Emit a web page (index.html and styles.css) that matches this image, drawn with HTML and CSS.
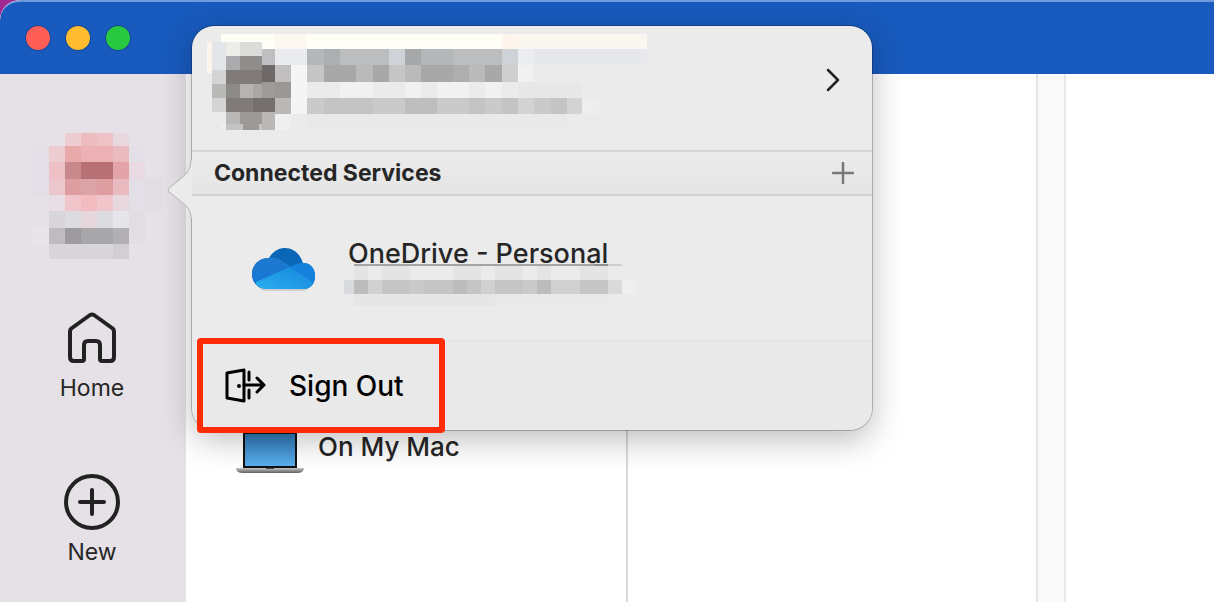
FILE: index.html
```
<!DOCTYPE html>
<html lang="en">
<head>
    <meta charset="UTF-8">
    <meta name="viewport" content="width=device-width, initial-scale=1.0">
    <title>Accounts</title>
    <link rel="stylesheet" href="styles.css">
</head>
<body>
    <div class="window">
        <header class="titlebar">
            <button class="light close" aria-label="Close"></button>
            <button class="light minimize" aria-label="Minimize"></button>
            <button class="light zoom" aria-label="Zoom"></button>
        </header>

        <main class="content">
            <nav class="sidebar">
                <button class="account" aria-label="Account">
                    <svg class="account-mosaic" viewBox="36 69 391 378" shape-rendering="crispEdges">
                        <path fill="#e2e0e6" d="M36 109h50v145H36zM328 109h48v194h-48z"/>
                        <path fill="#e1dde2" d="M376 207h51v97h-51zM328 304h48v98h-48z"/>
                        <path fill="#edcdd2" d="M134 69h49v40h-49zM86 109h48v48H86z"/>
                        <path fill="#edbcc1" d="M183 69h48v40h-48z"/>
                        <path fill="#edc3c8" d="M231 69h49v40h-49z"/>
                        <path fill="#e7d8dd" d="M280 69h48v40h-48zM280 254h48v50h-48z"/>
                        <path fill="#e9a8aa" d="M134 109h49v48h-49z"/>
                        <path fill="#ebb1b4" d="M183 109h97v48h-97z"/>
                        <path fill="#e9babf" d="M280 109h48v48h-48zM280 207h48v47h-48z"/>
                        <path fill="#edc0c5" d="M86 157h48v50H86z"/>
                        <path fill="#c9888c" d="M134 157h49v50h-49z"/>
                        <path fill="#b77175" d="M183 157h97v50h-97z"/>
                        <path fill="#e2a4a8" d="M280 157h48v50h-48z"/>
                        <path fill="#e8dae0" d="M328 157h48v50h-48z"/>
                        <path fill="#ebc7cd" d="M86 207h48v47H86z"/>
                        <path fill="#dd9da1" d="M134 207h49v47h-49zM231 207h49v47h-49z"/>
                        <path fill="#dca3a7" d="M183 207h48v47h-48z"/>
                        <path fill="#e8dfe4" d="M86 254h48v50H86z"/>
                        <path fill="#f0c6cb" d="M134 254h49v50h-49zM231 254h49v50h-49z"/>
                        <path fill="#f1bbbf" d="M183 254h48v50h-48z"/>
                        <path fill="#d8d6da" d="M86 304h48v50H86z"/>
                        <path fill="#dcdbdf" d="M134 304h49v50h-49zM231 304h49v50h-49z"/>
                        <path fill="#e5d6db" d="M183 304h48v50h-48z"/>
                        <path fill="#e5e5ea" d="M280 304h48v50h-48z"/>
                        <path fill="#e9e4ea" d="M36 354h50v48H36z"/>
                        <path fill="#bfbbbf" d="M86 354h48v48H86z"/>
                        <path fill="#9e9b9e" d="M134 354h49v48h-49z"/>
                        <path fill="#a7a6a9" d="M183 354h97v48h-97z"/>
                        <path fill="#b3b0b4" d="M280 354h48v48h-48z"/>
                        <path fill="#d9d6db" d="M86 402h194v45H86z"/>
                        <path fill="#d2cfd3" d="M280 402h48v45h-48z"/>
                    </svg>
                </button>
                <button class="nav-item home">
                    <svg width="56" height="56" viewBox="0 0 56 56">
                        <path d="M6 22V47Q6 51 10 51H18Q20 51 20 49V35Q20 31 24 31H32Q36 31 36 35V49Q36 51 38 51H46Q50 51 50 47V22Q50 19 48 18L30 5Q28 4 26 5L8 18Q6 19 6 22Z"/>
                    </svg>
                    <span>Home</span>
                </button>
                <button class="nav-item">
                    <svg width="56" height="56" viewBox="0 0 56 56">
                        <circle cx="28" cy="28" r="26"/>
                        <path d="M28 16v24M16 28h24"/>
                    </svg>
                    <span>New</span>
                </button>
            </nav>

            <section class="places">
                <button class="place">
                    <svg width="70" height="48" viewBox="0 0 70 48">
                        <defs>
                            <linearGradient id="screen" x2="0" y2="1">
                                <stop offset="0" stop-color="#2f78b5"/>
                                <stop offset="1" stop-color="#5aaeef"/>
                            </linearGradient>
                            <linearGradient id="base" x2="0" y2="1">
                                <stop offset="0" stop-color="#c9c9c9"/>
                                <stop offset="1" stop-color="#5f5f5f"/>
                            </linearGradient>
                        </defs>
                        <path fill="#111" d="M8 4h54v37H8z"/>
                        <path fill="url(#screen)" d="M10 6h50v32H10z"/>
                        <path fill="url(#base)" d="M1 40h68q0 5-7 5H8q-7 0-7-5z"/>
                        <path fill="#555" d="M31 40h8v1h-8z"/>
                    </svg>
                    <span>On My Mac</span>
                </button>
            </section>
            <section class="files"></section>
            <div class="gutter"></div>
            <section class="preview"></section>
        </main>
    </div>

    <div class="popover">
        <svg class="arrow" width="26" height="58" viewBox="0 0 26 58">
            <path class="arrow-fill" d="M25 0H24C24 11 17 16 11 21L2 28Q0 30 2 32L11 39C17 44 24 48 24 58H25Z"/>
            <path class="arrow-edge" d="M24 0C24 11 17 16 11 21L2 28Q0 30 2 32L11 39C17 44 24 48 24 58"/>
        </svg>

        <button class="profile" aria-label="Account details">
            <svg class="profile-mosaic" viewBox="51 42 1320 288" shape-rendering="crispEdges">
                <path fill="#fffef6" d="M93 42h843v45H93z"/>
                <path fill="#fcf7f0" d="M255 42h97v45h-97z"/>
                <path fill="#faf6f0" d="M984 42h387v45H984z"/>
                <path fill="#fdf5ec" d="M936 42h48v45h-48zM51 66h14v94H51z"/>
                <path fill="#e3e6e8" d="M65 66h43v84H65z"/>
                <path fill="#edede9" d="M108 66h42v42h-42z"/>
                <path fill="#dcdcda" d="M150 66h66v42h-66z"/>
                <path fill="#bfbfc1" d="M216 87h39v48h-39z"/>
                <path fill="#e9ebee" d="M255 87h97v48h-97z"/>
                <path fill="#ababad" d="M108 108h42v42h-42z"/>
                <path fill="#8f8e8d" d="M150 108h66v42h-66z"/>
                <path fill="#6f6869" d="M216 135h39v50h-39z"/>
                <path fill="#c0bebf" d="M255 135h49v50h-49z"/>
                <path fill="#f5f5f5" d="M304 135h48v147h-48z"/>
                <path fill="#d4d4d4" d="M65 150h43v42H65zM65 234h43v42H65z"/>
                <path fill="#807b79" d="M108 150h108v42H108zM108 234h82v42h-82z"/>
                <path fill="#b9b9b8" d="M65 192h43v42H65z"/>
                <path fill="#8d8b8a" d="M108 192h42v42h-42z"/>
                <path fill="#b7b3b1" d="M150 192h40v42h-40z"/>
                <path fill="#aca7a5" d="M190 192h26v42h-26z"/>
                <path fill="#a09b9b" d="M216 185h39v49h-39z"/>
                <path fill="#9b9795" d="M255 185h49v48h-49z"/>
                <path fill="#756f6e" d="M190 234h65v42h-65z"/>
                <path fill="#bab8b7" d="M255 233h49v49h-49zM108 276h42v36h-42zM216 276h39v54h-39z"/>
                <path fill="#9c9997" d="M150 276h66v36h-66zM159 312h48v18h-48z"/>
                <path fill="#c4c4c5" d="M108 312h51v18h-51zM207 312h9v18h-9z"/>
                <path fill="#efefef" d="M255 282h49v48h-49zM93 312h15v18H93z"/>

                <path fill="#b4b7b9" d="M352 87h49v48h-49zM693 87h96v48h-96z"/>
                <path fill="#acafb1" d="M401 87h49v48h-49z"/>
                <path fill="#bbbdbf" d="M450 87h146v48H450zM789 87h147v48H789z"/>
                <path fill="#cfd2d6" d="M596 87h49v48h-49zM936 87h48v48h-48z"/>
                <path fill="#a6a8aa" d="M645 87h48v48h-48z"/>
                <path fill="#ebedf0" d="M984 87h48v48h-48z"/>
                <path fill="#e6e8eb" d="M1032 87h339v48h-339z"/>
                <path fill="#c5c5c5" d="M352 135h49v50h-49zM596 135h49v50h-49z"/>
                <path fill="#a8a8a8" d="M401 135h97v50h-97zM548 135h48v50h-48zM693 135h96v50h-96zM886 135h50v50h-50z"/>
                <path fill="#bababa" d="M498 135h50v50h-50zM645 135h48v50h-48zM838 135h48v50h-48z"/>
                <path fill="#aeaeae" d="M789 135h49v50h-49z"/>
                <path fill="#cfcfcf" d="M936 135h48v50h-48z"/>
                <path fill="#f1f1f1" d="M984 135h48v50h-48zM450 185h98v48h-98zM645 185h48v48h-48zM741 185h97v48h-97zM886 185h50v48h-50z"/>
                <path fill="#e8e8e8" d="M984 185h193v48H984z"/>
                <path fill="#cacaca" d="M352 233h49v49h-49zM548 233h97v49h-97zM741 233h97v49h-97zM886 233h50v49h-50zM1032 233h50v49h-50z"/>
                <path fill="#c4c4c4" d="M401 233h147v49H401zM838 233h48v49h-48zM936 233h48v49h-48zM1082 233h48v49h-48z"/>
                <path fill="#bebebe" d="M645 233h96v49h-96z"/>
                <path fill="#d3d3d3" d="M984 233h48v49h-48zM1130 233h47v49h-47z"/>
                <path fill="#eeeeee" d="M1177 233h50v49h-50z"/>
                <path fill="#e9e9e9" d="M352 282h778v48H352z"/>
            </svg>
            <svg class="chevron" width="16" height="24" viewBox="0 0 16 24">
                <path d="M3 2l10 10L3 22"/>
            </svg>
        </button>

        <div class="services-bar">
            <h2>Connected Services</h2>
            <button class="add" aria-label="Add a service">
                <svg width="22" height="22" viewBox="0 0 22 22">
                    <path d="M11 1v20M1 11h20"/>
                </svg>
            </button>
        </div>

        <div class="service">
            <svg class="cloud" width="66" height="46" viewBox="0 0 66 46">
                <defs>
                    <linearGradient id="cloud-front" x1="0" y1="1" x2="1" y2="0">
                        <stop offset="0" stop-color="#2bb0f0"/>
                        <stop offset="1" stop-color="#1785dd"/>
                    </linearGradient>
                    <linearGradient id="cloud-left" x2="0" y2="1">
                        <stop offset="0" stop-color="#1f78cd"/>
                        <stop offset="1" stop-color="#1478d8"/>
                    </linearGradient>
                    <clipPath id="cloud-shape">
                        <path d="M14 43A14 15 0 0 1 0 28C0 19 7 12 17 12C21 5 27 2 33 2C42 2 48 8 51 17C59 17 63 23 63 30C63 37 59 43 51 43Z"/>
                    </clipPath>
                </defs>
                <path fill="#cfcfcf" d="M6 40h52q-2 5-8 5H14q-6 0-8-5z"/>
                <g clip-path="url(#cloud-shape)">
                    <path fill="#0a66b7" d="M0 0h66v46H0z"/>
                    <path fill="url(#cloud-left)" d="M0 8L17 11Q24 11 30 15L40 21L4 42L0 46Z"/>
                    <path fill="#1482dc" d="M38 21Q44 17 52 17L66 16V46H60Z"/>
                    <path fill="url(#cloud-front)" d="M4 36L38 21L60 36L64 46H4Z"/>
                </g>
            </svg>
            <div class="service-text">
                <span class="service-name">OneDrive - Personal</span>
                <svg class="service-mosaic" viewBox="0 0 292 42" shape-rendering="crispEdges">
                    <path fill="#a5a5a5" d="M10 0h254v2H10z"/>
                    <path fill="#8e8e8e" d="M250 0h14v2h-14z"/>
                    <path fill="#cfcfcf" d="M264 0h14v2h-14z"/>
                    <path fill="#e4e4e4" d="M10 2h14v14H10zM38 2h28v14H38zM109 2h28v14h-28zM151 2h28v14h-28zM193 2h14v14h-14zM236 2h28v14h-28z"/>
                    <path fill="#d9dadd" d="M0 16h10v14H0z"/>
                    <path fill="#bcbcbc" d="M10 16h14v14H10zM109 16h14v14h-14zM193 16h14v14h-14z"/>
                    <path fill="#d1d1d1" d="M24 16h14v14H24zM137 16h14v14h-14zM207 16h29v14h-29z"/>
                    <path fill="#c5c5c5" d="M38 16h28v14H38zM80 16h29v14H80zM123 16h14v14h-14zM151 16h28v14h-28zM236 16h28v14h-28z"/>
                    <path fill="#cacaca" d="M66 16h14v14H66zM179 16h14v14h-14z"/>
                    <path fill="#dadada" d="M264 16h14v14h-14z"/>
                    <path fill="#efefef" d="M278 16h14v14h-14z"/>
                    <path fill="#e6e6e6" d="M10 30h99v12H10zM109 30h42v12h-42z"/>
                    <path fill="#e9e9e9" d="M151 30h113v12H151z"/>
                </svg>
            </div>
        </div>

        <div class="footer">
            <button class="sign-out">
                <svg width="42" height="36" viewBox="0 0 42 36">
                    <path d="M2 5L19 2V33L2 30Z"/>
                    <path d="M24 4V12M24 22V30M19 17H39M32 10L39 17L32 24"/>
                    <circle cx="14" cy="18" r="2"/>
                </svg>
                <span>Sign Out</span>
            </button>
        </div>
    </div>
</body>
</html>
```

FILE: styles.css
```
* {
    box-sizing: border-box;
}
body {
    margin: 0;
    font-family: Inter, "Liberation Sans", sans-serif;
    color: #262626;
    background-color: #a12a92;
    overflow: hidden;
}
button {
    margin: 0;
    padding: 0;
    border: none;
    background: none;
    color: inherit;
    font: inherit;
    cursor: pointer;
}
svg {
    display: block;
    flex: none;
}
.window {
    display: flex;
    flex-direction: column;
    height: 100vh;
    border-top-left-radius: 20px;
    overflow: hidden;
    background-color: #fff;
}

/* Title bar */
.titlebar {
    display: flex;
    gap: 16px;
    height: 74px;
    flex: none;
    padding: 24px 26px;
    background-color: #185abd;
    border-top: 2px solid #6f9bdb;
    border-top-left-radius: 20px;
}
.light {
    width: 24px;
    height: 24px;
    border-radius: 50%;
    box-shadow: 0 0 0 1px rgba(0, 0, 0, 0.2);
}
.close {
    background-color: #ff5f57;
}
.minimize {
    background-color: #febc2e;
}
.zoom {
    background-color: #28c840;
}

/* Columns */
.content {
    display: flex;
    flex: 1;
}
.sidebar {
    width: 186px;
    flex: none;
    display: flex;
    flex-direction: column;
    align-items: center;
    padding: 59px 2px 0 0;
    background-color: #e5e1e6;
}
.account-mosaic {
    width: 130px;
    height: 126px;
    margin-left: 10px;
}
.nav-item {
    display: flex;
    flex-direction: column;
    align-items: center;
    gap: 7px;
    margin-bottom: 71px;
    font-size: 23px;
    line-height: 30px;
}
.home {
    margin-top: 51px;
}
.nav-item svg {
    fill: none;
    stroke: #222;
    stroke-width: 4;
    stroke-linecap: round;
    stroke-linejoin: round;
}
.places {
    width: 442px;
    flex: none;
    padding: 354px 0 0 49px;
    border-right: 2px solid #d9d9d9;
}
.place {
    display: flex;
    align-items: center;
    gap: 13px;
    font-size: 26px;
    font-weight: 500;
    line-height: 38px;
}
.place span {
    padding-bottom: 10px;
}
.files {
    width: 410px;
    flex: none;
    border-right: 2px solid #e5e5e5;
}
.gutter {
    width: 28px;
    flex: none;
    background-color: #f9f9f9;
    border-right: 2px solid #e8e8e8;
}
.preview {
    flex: 1;
}

/* Account popover */
.popover {
    position: absolute;
    top: 26px;
    left: 192px;
    width: 680px;
    border-radius: 22px;
    background-color: #ebebeb;
    box-shadow: 0 0 0 1px rgba(0, 0, 0, 0.24), 0 10px 32px rgba(0, 0, 0, 0.26);
}
.arrow {
    position: absolute;
    top: 134px;
    left: -25px;
}
.arrow-fill {
    fill: #ebebeb;
}
.arrow-edge {
    fill: none;
    stroke: #b4b2b5;
}
.profile {
    display: flex;
    justify-content: space-between;
    align-items: flex-start;
    width: 100%;
    height: 124px;
    padding: 8px 31px 0 15px;
}
.profile-mosaic {
    width: 440px;
    height: 96px;
}
.chevron {
    margin-top: 34px;
    fill: none;
    stroke: #222;
    stroke-width: 2.5;
    stroke-linecap: round;
    stroke-linejoin: round;
}
.services-bar {
    display: flex;
    justify-content: space-between;
    align-items: center;
    height: 46px;
    padding: 0 18px 0 22px;
    border-top: 2px solid #d6d6d6;
    border-bottom: 2px solid #d2d2d2;
    background: linear-gradient(#ebebeb, #e5e5e5);
}
.services-bar h2 {
    margin: 0;
    font-size: 23px;
    font-weight: 700;
    line-height: 28px;
}
.add svg {
    fill: none;
    stroke: #777;
    stroke-width: 2.5;
    stroke-linecap: round;
}
.service {
    display: flex;
    align-items: center;
    gap: 26px;
    height: 144px;
    padding: 0 60px;
}
.cloud {
    margin-top: 2px;
}
.service-text {
    padding-top: 14px;
}
.service-name {
    display: block;
    padding-left: 4px;
    font-size: 27px;
    font-weight: 500;
    line-height: 20px;
}
.service-mosaic {
    width: 292px;
    height: 42px;
}
.footer {
    display: flex;
    height: 90px;
    padding-left: 5px;
    border-top: 2px solid #e5e5e5;
    border-radius: 0 0 22px 22px;
    background-color: #e9e9e9;
}
.sign-out {
    display: flex;
    align-items: center;
    gap: 22px;
    width: 248px;
    height: 95px;
    margin-top: -4px;
    padding-left: 22px;
    border: 6px solid #ff2a06;
    border-radius: 4px;
    color: #000;
    font-size: 28px;
    font-weight: 500;
}
.sign-out svg {
    fill: none;
    stroke: #000;
    stroke-width: 3;
    stroke-linecap: round;
    stroke-linejoin: round;
}
.sign-out circle {
    fill: #000;
    stroke: none;
}
```
